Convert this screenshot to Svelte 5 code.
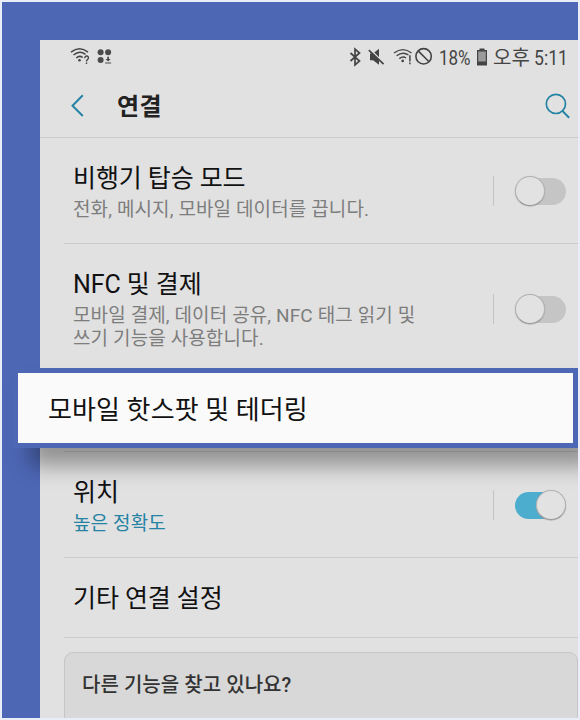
<script>
  const top = [
    { title: '비행기 탑승 모드', lines: ['전화, 메시지, 모바일 데이터를 끕니다.'], kind: 'airplane' },
    { title: 'NFC 및 결제', lines: ['모바일 결제, 데이터 공유, NFC 태그 읽기 및', '쓰기 기능을 사용합니다.'], kind: 'nfc' }
  ];
</script>

<div class="frame">
  <div class="screen">
    <div class="status">
      <svg class="left-icons" width="44" height="20" viewBox="0 0 44 20" fill="none" stroke="#444" stroke-width="1.5">
        <path d="M1 6.2Q9.5-.8 18 6.2M3.5 9Q9.5 3.9 15.5 8.3M6.3 12Q9.5 9 12.7 11.5" />
        <circle cx="9.5" cy="14.3" r="1.3" fill="#444" stroke="none" />
        <path d="M14.8 12.2c0-3.2 4.2-2.7 3.6 0-.3 1.4-1.9 1.5-1.9 3.4M16.5 16.5v1.5" stroke-width="1.4" />
        <g fill="#4a4a4a" stroke="none">
          <circle cx="30.6" cy="6.3" r="3" /><circle cx="38.1" cy="6.3" r="3" /><circle cx="30.6" cy="14" r="3" />
          <path d="M37.2 10.7h1.8v2.2h1.7L38.1 15.5l-2.6-2.6h1.7zM35.2 16.4h5.9v1h-5.9z" />
        </g>
      </svg>
      <div class="right">
        <svg width="86" height="22" viewBox="0 0 86 22" fill="none" stroke="#444" stroke-width="1.6">
          <path d="M1.5 7l9 8L6 18.8V3.2L10.5 7l-9 8" stroke-width="1.7" />
          <path d="M21 7.5h3l6-4.8v16l-6-4.5h-3z" fill="#444" stroke="none" />
          <path d="M20.5 3.2l15.5 15" stroke="#e1e1e1" stroke-width="2" />
          <path d="M19.8 4.2l14.8 14" stroke-width="1.7" />
          <path d="M45 7Q54 .2 62.5 7M47.6 9.7Q54 5 59.5 9M50.3 12.6Q54 9.8 57 12" stroke-width="1.4" />
          <circle cx="53.7" cy="14.9" r="1.3" fill="#444" stroke="none" />
          <path d="M60.9 9.3v6.2M60.9 16.5v1.8" stroke-width="1.5" />
          <circle cx="74.6" cy="10.3" r="7.7" /><path d="M69.2 4.9l10.8 10.8" />
        </svg>
        <span class="pct">18%</span>
        <svg class="battery" width="12" height="18" viewBox="0 0 12 18">
          <path d="M3.5 .5h5v2h-5zM1 2h10v15.5H1z" fill="#444" /><path d="M2.2 3.5h7.6v10H2.2z" fill="#9b9b9b" />
        </svg>
        <span class="ampm">오후</span>
        <span class="clock">5:11</span>
      </div>
    </div>
    <header>
      <svg width="14" height="24" viewBox="0 0 14 24" fill="none" stroke="#2583a3" stroke-width="2"><path d="M12.8 2.2L2.5 12.7l10.3 10.3" /></svg>
      <h1>연결</h1>
      <svg class="search" width="28" height="28" viewBox="0 0 28 28" fill="none" stroke="#2583a3" stroke-width="1.7"><circle cx="12.9" cy="11.9" r="9.6" /><path d="M19.4 18.9l6.7 6.9" stroke-width="2" /></svg>
    </header>
    <main>
      {#each top as item}
        <section class={item.kind}>
          <div class="copy">
            <h2>{item.title}</h2>
            {#each item.lines as line}<p>{line}</p>{/each}
          </div>
          <div class="control"><div class="switch"><i></i></div></div>
        </section>
      {/each}
      <div class="covered"></div>
      <section class="location">
        <div class="copy"><h2>위치</h2><p class="accent">높은 정확도</p></div>
        <div class="control"><div class="switch on"><i></i></div></div>
      </section>
      <section class="more"><h2>기타 연결 설정</h2></section>
      <aside>다른 기능을 찾고 있나요?</aside>
    </main>
  </div>
  <div class="spotlight">모바일 핫스팟 및 테더링</div>
</div>

<style>
  :global(body) { margin: 0; }
  .frame, .frame * { box-sizing: border-box; }
  .frame {
    position: relative; width: 580px; height: 720px; overflow: hidden;
    border: 2px solid #e9edf7; background: #4d67b5; padding: 38px 0 0 38px;
    font-family: Roboto, "Noto Sans CJK KR", sans-serif; color: #111;
  }
  .screen { height: 678px; background: #e1e1e1; overflow: hidden; }
  h1, h2, p { margin: 0; white-space: nowrap; }
  .status { height: 35px; display: flex; justify-content: space-between; padding: 6px 9px 0 30px; }
  .left-icons { display: block; }
  .right { display: flex; align-items: flex-start; height: 24px; font: 20px/24px Roboto, "Noto Sans CJK KR", sans-serif; color: #444; white-space: nowrap; }
  .right svg { flex: none; }
  .pct, .clock { font-size: 21px; transform: scaleX(.81); transform-origin: left; }
  .pct { margin-left: 4px; width: 31px; }
  .battery { margin: 2px 0 0 6px; }
  .ampm { margin-left: 5px; width: 37px; }
  .clock { margin-left: 4px; width: 35px; transform: scaleX(.84); }
  header { height: 63px; display: flex; align-items: flex-start; padding: 18px 7px 0 30px; border-bottom: 1px solid #cacaca; }
  header h1 { margin: -4px 0 0 33px; font-size: 24px; line-height: 36px; font-weight: 700; color: #222; letter-spacing: .3px; }
  .search { margin: -1px 0 0 auto; }
  main { padding-left: 24px; }
  section { display: flex; justify-content: space-between; border-bottom: 1px solid #cbcbcb; padding-left: 9px; }
  .airplane { height: 106px; padding-top: 23px; }
  .nfc { height: 124px; padding-top: 23px; border-bottom-color: transparent; }
  .covered { height: 84px; border-bottom: 1px solid #cbcbcb; }
  .location { height: 106px; padding-top: 23px; }
  .more { height: 80px; padding-top: 23px; }
  h2 { font-size: 25px; line-height: 36px; font-weight: 400; letter-spacing: -.1px; }
  p { font-size: 19px; line-height: 23px; color: #7d7d7d; letter-spacing: .12px; }
  h2 + p { margin-top: 1px; }
  .accent { color: #2583a3; }
  .control { display: flex; align-items: center; height: 30px; margin-top: 15px; padding: 0 12px 0 21px; border-left: 1.5px solid #c3c3c3; }
  .nfc .control { margin-top: 27px; }
  .switch { width: 51px; height: 27px; border-radius: 14px; background: #c5c5c5; display: flex; align-items: center; }
  .switch i { flex: none; width: 30px; height: 30px; border: 1px solid #b3b3b3; border-bottom-color: #999; border-radius: 50%; background: #e2e2e2; box-shadow: 0 .5px 1px #999; }
  .on { justify-content: flex-end; background: #4cadcf; }
  aside { margin-top: 14px; height: 80px; border: 1.5px solid #c5c5c5; border-radius: 9px; background: #d8d8d8; padding: 18px 17px; font-size: 20px; line-height: 28px; font-weight: 500; color: #333; white-space: nowrap; letter-spacing: .05px; }
  .spotlight {
    position: absolute; left: 11px; top: 366px; width: 565px; height: 80px; border: 5px solid #4d67b5; background: #fafafa;
    padding: 19px 0 0 30px; font-size: 26px; line-height: 36px; letter-spacing: .1px; white-space: nowrap; box-shadow: 17px 18px 20px rgba(0,0,0,.35);
  }
</style>
